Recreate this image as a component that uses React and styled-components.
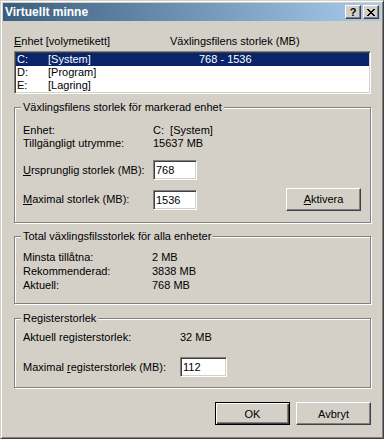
import styled, { createGlobalStyle } from "styled-components";

const GlobalStyle = createGlobalStyle`
  html, body {
    margin: 0;
    padding: 0;
    background: #d4d0c8;
  }
  body {
    font-family: Tahoma, "Liberation Sans", Arial, sans-serif;
    font-size: 11px;
    color: #000;
  }
`;

const Window = styled.div`
  box-sizing: border-box;
  width: 384px;
  height: 439px;
  display: flex;
  flex-direction: column;
  background: #d4d0c8;
  border: 1px solid;
  border-color: #d4d0c8 #404040 #404040 #d4d0c8;
  box-shadow: inset 1px 1px #fff, inset -1px -1px #808080;
  padding: 2px;
`;

const TitleBar = styled.div`
  height: 18px;
  display: flex;
  align-items: center;
  padding: 0 2px;
  background: linear-gradient(to right, #3b5e7e, #a8cbee);
`;

const Title = styled.div`
  flex: 1;
  color: #fff;
  font-weight: bold;
  font-size: 12px;
  line-height: 14px;
`;

const CaptionButton = styled.div`
  box-sizing: border-box;
  width: 16px;
  height: 14px;
  margin-left: ${(p) => (p.$gap ? "2px" : "0")};
  display: flex;
  align-items: center;
  justify-content: center;
  background: #d4d0c8;
  border: 1px solid;
  border-color: #fff #404040 #404040 #fff;
  box-shadow: inset -1px -1px #808080;
  font-weight: bold;
  font-size: 11px;
  line-height: 11px;
`;

const Body = styled.div`
  flex: 1;
  display: flex;
  flex-direction: column;
  padding: 14px 10px 0 11px;
`;

const HeaderRow = styled.div`
  display: grid;
  grid-template-columns: 156px 1fr;
  line-height: 13px;
`;

const List = styled.div`
  margin-top: 3px;
  background: #fff;
  border: 1px solid;
  border-color: #808080 #fff #fff #808080;
  box-shadow: inset 1px 1px #404040, inset -1px -1px #d4d0c8;
  padding: 1px;
`;

const ListRow = styled.div`
  display: grid;
  grid-template-columns: 31px 151px 1fr;
  height: 13px;
  line-height: 13px;
  padding-left: 1px;
  background: ${(p) => (p.$selected ? "#0a246a" : "transparent")};
  color: ${(p) => (p.$selected ? "#fff" : "#000")};
`;

const Group = styled.fieldset`
  margin: ${(p) => p.$top}px 0 0 0;
  padding: 0;
  min-width: 0;
  border: 1px solid #808080;
  box-shadow: inset 1px 1px #fff, 1px 1px #fff;
`;

const Legend = styled.legend`
  margin-left: 6px;
  padding: 0 2px;
  line-height: 13px;
  background: #d4d0c8;
`;

const GroupBody = styled.div`
  padding: ${(p) => p.$pt}px 9px ${(p) => p.$pb}px 8px;
`;

const InfoRow = styled.div`
  display: grid;
  grid-template-columns: ${(p) => p.$label}px 1fr;
  line-height: ${(p) => p.$lh || 13}px;
`;

const FieldRow = styled.div`
  display: grid;
  grid-template-columns: ${(p) => p.$label}px 44px 1fr auto;
  align-items: center;
  margin-top: ${(p) => p.$top}px;
  line-height: 13px;
`;

const Field = styled.input`
  box-sizing: border-box;
  width: ${(p) => p.$w || 44}px;
  height: 20px;
  margin: 0;
  padding: 0 2px;
  font: inherit;
  color: #000;
  background: #fff;
  border: 1px solid;
  border-color: #808080 #fff #fff #808080;
  box-shadow: inset 1px 1px #404040, inset -1px -1px #d4d0c8;
  outline: none;
`;

const Button = styled.button`
  box-sizing: border-box;
  width: 75px;
  height: 23px;
  margin: 0;
  padding: 0;
  font: inherit;
  color: #000;
  background: #d4d0c8;
  border: 1px solid;
  border-color: ${(p) => (p.$default ? "#000" : "#fff #404040 #404040 #fff")};
  box-shadow: ${(p) =>
    p.$default
      ? "inset 1px 1px #fff, inset -1px -1px #404040, inset -2px -2px #808080"
      : "inset -1px -1px #808080"};
  grid-column: 4;
`;

const Footer = styled.div`
  display: flex;
  justify-content: flex-end;
  gap: 6px;
  margin-top: 14px;
`;

const U = styled.span`
  text-decoration: underline;
`;

const CloseGlyph = () => (
  <svg width="8" height="7" viewBox="0 0 8 7">
    <path
      fill="#000"
      d="M0 0h2v1H0zM6 0h2v1H6zM1 1h2v1H1zM5 1h2v1H5zM2 2h4v1H2zM3 3h2v1H3zM2 4h4v1H2zM1 5h2v1H1zM5 5h2v1H5zM0 6h2v1H0zM6 6h2v1H6z"
    />
  </svg>
);

const drives = [
  { letter: "C:", label: "[System]", size: "768 - 1536", selected: true },
  { letter: "D:", label: "[Program]", size: "" },
  { letter: "E:", label: "[Lagring]", size: "" },
];

export default function App() {
  return (
    <>
      <GlobalStyle />
      <Window>
        <TitleBar>
          <Title>Virtuellt minne</Title>
          <CaptionButton>?</CaptionButton>
          <CaptionButton $gap>
            <CloseGlyph />
          </CaptionButton>
        </TitleBar>
        <Body>
          <HeaderRow>
            <span>
              <U>E</U>nhet [volymetikett]
            </span>
            <span>Växlingsfilens storlek (MB)</span>
          </HeaderRow>
          <List>
            {drives.map((d) => (
              <ListRow key={d.letter} $selected={d.selected}>
                <span>{d.letter}</span>
                <span>{d.label}</span>
                <span>{d.size}</span>
              </ListRow>
            ))}
          </List>

          <Group $top={7}>
            <Legend>Växlingsfilens storlek för markerad enhet</Legend>
            <GroupBody $pt={10} $pb={11}>
              <InfoRow $label={130}>
                <span>Enhet:</span>
                <span>C:&nbsp;&nbsp;[System]</span>
              </InfoRow>
              <InfoRow $label={130}>
                <span>Tillgängligt utrymme:</span>
                <span>15637 MB</span>
              </InfoRow>
              <FieldRow $label={130} $top={10}>
                <span>
                  <U>U</U>rsprunglig storlek (MB):
                </span>
                <Field defaultValue="768" />
              </FieldRow>
              <FieldRow $label={130} $top={8}>
                <span>
                  <U>M</U>aximal storlek (MB):
                </span>
                <Field defaultValue="1536" />
                <Button>
                  <U>A</U>ktivera
                </Button>
              </FieldRow>
            </GroupBody>
          </Group>

          <Group $top={7}>
            <Legend>Total växlingsfilsstorlek för alla enheter</Legend>
            <GroupBody $pt={7} $pb={11}>
              <InfoRow $label={129} $lh={14}>
                <span>Minsta tillåtna:</span>
                <span>2 MB</span>
              </InfoRow>
              <InfoRow $label={129} $lh={14}>
                <span>Rekommenderad:</span>
                <span>3838 MB</span>
              </InfoRow>
              <InfoRow $label={129} $lh={14}>
                <span>Aktuell:</span>
                <span>768 MB</span>
              </InfoRow>
            </GroupBody>
          </Group>

          <Group $top={8}>
            <Legend>Registerstorlek</Legend>
            <GroupBody $pt={6} $pb={10}>
              <InfoRow $label={157}>
                <span>Aktuell registerstorlek:</span>
                <span>32 MB</span>
              </InfoRow>
              <FieldRow $label={157} $top={13}>
                <span>
                  Maximal <U>r</U>egisterstorlek (MB):
                </span>
                <Field $w={47} defaultValue="112" />
              </FieldRow>
            </GroupBody>
          </Group>

          <Footer>
            <Button $default>OK</Button>
            <Button>Avbryt</Button>
          </Footer>
        </Body>
      </Window>
    </>
  );
}
